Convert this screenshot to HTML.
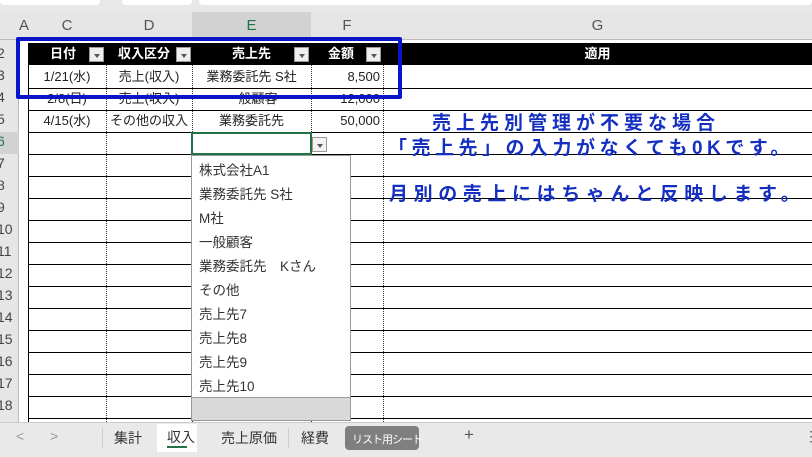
<!DOCTYPE html>
<html><head><meta charset="utf-8"><style>
*{margin:0;padding:0;box-sizing:border-box}
body{width:812px;height:457px;overflow:hidden;background:#fff;font-family:"Liberation Sans","Noto Sans CJK JP",sans-serif;position:relative;color:#222}
.a{position:absolute}
.hl{position:absolute;left:28px;width:784px;height:1px;background:#000}
.vd{position:absolute;top:65px;height:357px;border-left:1px dotted #333}
.rn{position:absolute;left:0;width:19px;font-size:14px;color:#444;text-align:left;text-indent:-3px}
.ch{position:absolute;top:12px;height:28px;line-height:28px;font-size:15px;color:#555;text-align:center}
.c{position:absolute;font-size:13px;height:22px;line-height:22px}
.dd{position:absolute;width:15px;height:15px;background:#eee;border:1px solid #999;top:47px}
.dd:after{content:"";position:absolute;left:4px;top:6px;border:3px solid transparent;border-top:4px solid #555}
.it{position:absolute;left:199px;font-size:13.5px;color:#333}
.bt{position:absolute;color:#1530c0;font-size:19px;font-weight:bold;letter-spacing:5px;white-space:nowrap;font-family:"Liberation Sans","Noto Sans CJK JP",sans-serif}
.tab{position:absolute;top:428px;font-size:14px;color:#333}
</style></head><body>
<div class="a" style="left:0;top:0;width:812px;height:12px;background:#e8e8e8"></div>
<div class="a" style="left:0;top:0;width:100px;height:5px;background:#fff;border-radius:0 0 4px 4px"></div>
<div class="a" style="left:122px;top:0;width:70px;height:5px;background:#fff;border-radius:0 0 4px 4px"></div>
<div class="a" style="left:199px;top:0;width:613px;height:5px;background:#fff;border-radius:0 0 4px 4px"></div>
<div class="a" style="left:0;top:12px;width:812px;height:28px;background:#e6e6e6;border-bottom:1px solid #bbb"></div>
<div class="a" style="left:192px;top:12px;width:119px;height:28px;background:#d2d2d2;border-bottom:2px solid #217346"></div>
<div class="ch" style="left:19px;width:9px">A</div>
<div class="ch" style="left:28px;width:78px">C</div>
<div class="ch" style="left:106px;width:86px">D</div>
<div class="ch" style="left:192px;width:119px;color:#217346">E</div>
<div class="ch" style="left:311px;width:72px">F</div>
<div class="ch" style="left:383px;width:429px">G</div>
<div class="a" style="left:0;top:40px;width:19px;height:382px;background:#e6e6e6;border-right:1px solid #bbb"></div>
<div class="a" style="left:0;top:132px;width:19px;height:22px;background:#d2d2d2"></div>
<div class="rn" style="top:45px">2</div><div class="rn" style="top:67px">3</div><div class="rn" style="top:89px">4</div><div class="rn" style="top:111px">5</div><div class="rn" style="top:133px;color:#217346">6</div><div class="rn" style="top:155px">7</div><div class="rn" style="top:177px">8</div><div class="rn" style="top:199px">9</div><div class="rn" style="top:221px">10</div><div class="rn" style="top:243px">11</div><div class="rn" style="top:265px">12</div><div class="rn" style="top:287px">13</div><div class="rn" style="top:309px">14</div><div class="rn" style="top:331px">15</div><div class="rn" style="top:353px">16</div><div class="rn" style="top:375px">17</div><div class="rn" style="top:397px">18</div>
<div class="a" style="left:28px;top:43px;width:784px;height:22px;background:#000"></div>
<div class="hl" style="top:88px"></div><div class="hl" style="top:110px"></div><div class="hl" style="top:132px"></div><div class="hl" style="top:154px"></div><div class="hl" style="top:176px"></div><div class="hl" style="top:198px"></div><div class="hl" style="top:220px"></div><div class="hl" style="top:242px"></div><div class="hl" style="top:264px"></div><div class="hl" style="top:286px"></div><div class="hl" style="top:308px"></div><div class="hl" style="top:330px"></div><div class="hl" style="top:352px"></div><div class="hl" style="top:374px"></div><div class="hl" style="top:396px"></div><div class="hl" style="top:418px"></div>
<div class="a" style="left:28px;top:43px;width:1px;height:379px;background:#000"></div>
<div class="vd" style="left:106px"></div><div class="vd" style="left:192px"></div><div class="vd" style="left:311px"></div><div class="vd" style="left:383px"></div>
<div class="c" style="left:28px;top:43px;width:78px;text-align:center;color:#fff;font-weight:bold;text-indent:-8px">日付</div><div class="dd" style="left:89px"></div>
<div class="c" style="left:106px;top:43px;width:86px;text-align:center;color:#fff;font-weight:bold;text-indent:-10px">収入区分</div><div class="dd" style="left:176px"></div>
<div class="c" style="left:192px;top:43px;width:119px;text-align:center;color:#fff;font-weight:bold">売上先</div><div class="dd" style="left:294px"></div>
<div class="c" style="left:311px;top:43px;width:72px;text-align:center;color:#fff;font-weight:bold;text-indent:-12px">金額</div><div class="dd" style="left:366px"></div>
<div class="c" style="left:383px;top:43px;width:429px;text-align:center;color:#fff;font-weight:bold">適用</div>
<div class="c" style="left:28px;top:66px;width:78px;text-align:center">1/21(水)</div><div class="c" style="left:106px;top:66px;width:86px;text-align:center">売上(収入)</div><div class="c" style="left:192px;top:66px;width:119px;text-align:center">業務委託先 S社</div><div class="c" style="left:311px;top:66px;width:69px;text-align:right">8,500</div>
<div class="c" style="left:28px;top:88px;width:78px;text-align:center">2/8(日)</div><div class="c" style="left:106px;top:88px;width:86px;text-align:center">売上(収入)</div><div class="c" style="left:192px;top:88px;width:119px;text-align:center">一般顧客</div><div class="c" style="left:311px;top:88px;width:69px;text-align:right">12,000</div>
<div class="c" style="left:28px;top:110px;width:78px;text-align:center">4/15(水)</div><div class="c" style="left:106px;top:110px;width:86px;text-align:center">その他の収入</div><div class="c" style="left:192px;top:110px;width:119px;text-align:center">業務委託先</div><div class="c" style="left:311px;top:110px;width:69px;text-align:right">50,000</div>
<div class="a" style="left:16px;top:37px;width:386px;height:62px;border:4px solid #0a14c8;border-radius:2px"></div>
<div class="a" style="left:191px;top:132px;width:121px;height:23px;border:2px solid #217346;background:#fff"></div>
<div class="dd" style="left:312px;top:137px;background:#f2f2f2"></div>
<div class="a" style="left:191px;top:155px;width:160px;height:266px;background:#fff;border:1px solid #999"></div>
<div class="a" style="left:192px;top:397px;width:158px;height:23px;background:#d9d9d9;border-top:1px solid #999"></div>
<div class="it" style="top:159px">株式会社A1</div><div class="it" style="top:183px">業務委託先 S社</div><div class="it" style="top:207px">M社</div><div class="it" style="top:231px">一般顧客</div><div class="it" style="top:255px">業務委託先　Kさん</div><div class="it" style="top:279px">その他</div><div class="it" style="top:303px">売上先7</div><div class="it" style="top:327px">売上先8</div><div class="it" style="top:351px">売上先9</div><div class="it" style="top:375px">売上先10</div>
<div class="bt" style="left:432px;top:108px">売上先別管理が不要な場合</div>
<div class="bt" style="left:388px;top:133px;letter-spacing:4.5px">「売上先」の入力がなくても0Kです。</div>
<div class="bt" style="left:389px;top:179px;letter-spacing:5.6px">月別の売上にはちゃんと反映します。</div>
<div class="a" style="left:0;top:422px;width:812px;height:35px;background:#e9e9e9;border-top:1px solid #ccc"></div>
<div class="tab" style="left:16px;color:#999">&lt;</div><div class="tab" style="left:50px;color:#999">&gt;</div>
<div class="tab" style="left:114px">集計</div>
<div class="a" style="left:102px;top:428px;width:1px;height:20px;background:#ccc"></div>
<div class="a" style="left:157px;top:424px;width:40px;height:28px;background:#fff"></div>
<div class="tab" style="left:167px;top:427px">収入</div>
<div class="a" style="left:167px;top:446px;width:20px;height:2px;background:#217346"></div>
<div class="tab" style="left:221px">売上原価</div>
<div class="a" style="left:288px;top:428px;width:1px;height:20px;background:#ccc"></div>
<div class="tab" style="left:301px">経費</div>
<div class="a" style="left:345px;top:426px;width:74px;height:24px;background:#7f7f7f;border-radius:4px"></div>
<div class="tab" style="left:352px;top:431px;color:#fff;font-size:11px;letter-spacing:-1px">リスト用シート</div>
<div class="tab" style="left:464px;font-size:17px;top:425px;color:#555">+</div>
<div class="tab" style="left:804px;color:#555">⋮</div>
</body></html>
